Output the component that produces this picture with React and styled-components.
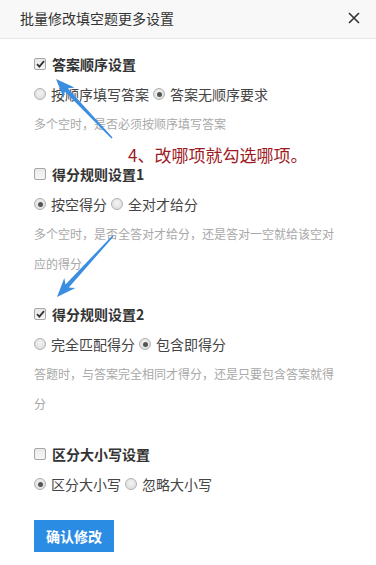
import React from "react";
import styled, { createGlobalStyle } from "styled-components";

const Global = createGlobalStyle`
  html, body { margin: 0; padding: 0; background: #fff; }
  body { font-family: "Noto Sans CJK SC", "Noto Sans", sans-serif; color: #333; }
  * { box-sizing: border-box; }
`;

const Dialog = styled.div`
  position: relative;
  width: 376px;
  height: 565px;
  background: #fff;
  overflow: hidden;
`;

const Header = styled.div`
  height: 39px;
  background: #f8f8f8;
  border-bottom: 1px solid #e8e8e8;
  display: flex;
  align-items: center;
  justify-content: space-between;
  padding: 0 15px 0 20px;
`;

const Title = styled.div`
  font-size: 14px;
  color: #333;
  line-height: 20px;
  margin-top: -3px;
`;

const Close = styled.button`
  border: 0;
  background: none;
  padding: 0;
  width: 14px;
  height: 14px;
  display: flex;
  align-items: center;
  justify-content: center;
  margin-top: -3px;
`;

const Body = styled.div`
  padding: 10px 34px 0 34px;
`;

const Section = styled.div`
  margin-bottom: 20px;
`;

const Line = styled.div`
  height: 30px;
  display: flex;
  align-items: center;
  font-size: 14px;
  color: ${(p) => (p.$bold ? "#333" : "#444")};
  font-weight: ${(p) => (p.$bold ? 700 : 400)};
`;

const Check = styled.span`
  width: 12px;
  height: 12px;
  border: 1px solid #a6a6a6;
  border-radius: 2px;
  background: linear-gradient(#e9e9e9, #f6f6f6);
  margin-right: 6px;
  display: inline-flex;
  align-items: center;
  justify-content: center;
  flex: none;
`;

const Radio = styled.span`
  width: 12px;
  height: 12px;
  border: 1px solid #b0b0b0;
  border-radius: 50%;
  background: radial-gradient(circle at 50% 40%, #f4f4f4, #d8d8d8);
  margin-right: 5px;
  display: inline-flex;
  align-items: center;
  justify-content: center;
  flex: none;
  &::after {
    content: "";
    display: ${(p) => (p.$on ? "block" : "none")};
    width: 5px;
    height: 5px;
    border-radius: 50%;
    background: #555;
  }
`;

const OptText = styled.span`
  margin-right: 4px;
`;

const Desc = styled.div`
  font-size: 12px;
  line-height: 30px;
  color: #a8a8a8;
  width: 308px;
`;

const Button = styled.button`
  margin-top: 1px;
  width: 80px;
  height: 32px;
  border: 0;
  background: #2b8ce4;
  color: #fff;
  font-family: inherit;
  font-size: 14px;
  font-weight: 700;
  padding: 0;
`;

const Note = styled.div`
  position: absolute;
  left: 128px;
  top: 143px;
  font-size: 17px;
  line-height: 24px;
  color: #9e1a1f;
  white-space: nowrap;
`;

const Overlay = styled.svg`
  position: absolute;
  left: 0;
  top: 0;
  pointer-events: none;
`;

function arrowPoints(tip, tail) {
  const dx = tail[0] - tip[0];
  const dy = tail[1] - tip[1];
  const len = Math.hypot(dx, dy);
  const ux = dx / len;
  const uy = dy / len;
  const nx = -uy;
  const ny = ux;
  const headLen = 19;
  const headW = 7.5;
  const neck = 15;
  const p = (d, w) => [tip[0] + ux * d + nx * w, tip[1] + uy * d + ny * w];
  const pts = [
    p(0, 0),
    p(headLen, headW),
    p(neck, 2.2),
    p(len, 0.8),
    p(len, -0.8),
    p(neck, -2.2),
    p(headLen, -headW),
  ];
  return pts.map((q) => q.map((v) => v.toFixed(1)).join(",")).join(" ");
}

const CheckMark = () => (
  <svg width="9" height="8" viewBox="0 0 9 8">
    <path d="M1 4.2 L3.4 6.6 L8 1.2" fill="none" stroke="#333" strokeWidth="1.8" />
  </svg>
);

const sections = [
  {
    title: "答案顺序设置",
    checked: true,
    opts: ["按顺序填写答案", "答案无顺序要求"],
    sel: 1,
    desc: "多个空时，是否必须按顺序填写答案",
  },
  {
    title: "得分规则设置1",
    checked: false,
    opts: ["按空得分", "全对才给分"],
    sel: 0,
    desc: "多个空时，是否全答对才给分，还是答对一空就给该空对应的得分",
  },
  {
    title: "得分规则设置2",
    checked: true,
    opts: ["完全匹配得分", "包含即得分"],
    sel: 1,
    desc: "答题时，与答案完全相同才得分，还是只要包含答案就得分",
  },
  {
    title: "区分大小写设置",
    checked: false,
    opts: ["区分大小写", "忽略大小写"],
    sel: 0,
  },
];

export default function App() {
  return (
    <>
      <Global />
      <Dialog>
        <Header>
          <Title>批量修改填空题更多设置</Title>
          <Close aria-label="关闭">
            <svg width="12" height="12" viewBox="0 0 12 12">
              <path d="M1 1 L11 11 M11 1 L1 11" stroke="#333" strokeWidth="1.6" />
            </svg>
          </Close>
        </Header>
        <Body>
          {sections.map((s, i) => (
            <Section key={i}>
              <Line $bold>
                <Check>{s.checked && <CheckMark />}</Check>
                {s.title}
              </Line>
              <Line>
                {s.opts.map((o, j) => (
                  <React.Fragment key={j}>
                    <Radio $on={s.sel === j} />
                    <OptText>{o}</OptText>
                  </React.Fragment>
                ))}
              </Line>
              {s.desc && <Desc>{s.desc}</Desc>}
            </Section>
          ))}
          <Button>确认修改</Button>
        </Body>
        <Note>4、改哪项就勾选哪项。</Note>
        <Overlay width="376" height="565" viewBox="0 0 376 565">
          <polygon points={arrowPoints([56, 79], [112, 138])} fill="#3a8ee2" />
          <polygon points={arrowPoints([57, 297], [113, 236])} fill="#3a8ee2" />
        </Overlay>
      </Dialog>
    </>
  );
}
